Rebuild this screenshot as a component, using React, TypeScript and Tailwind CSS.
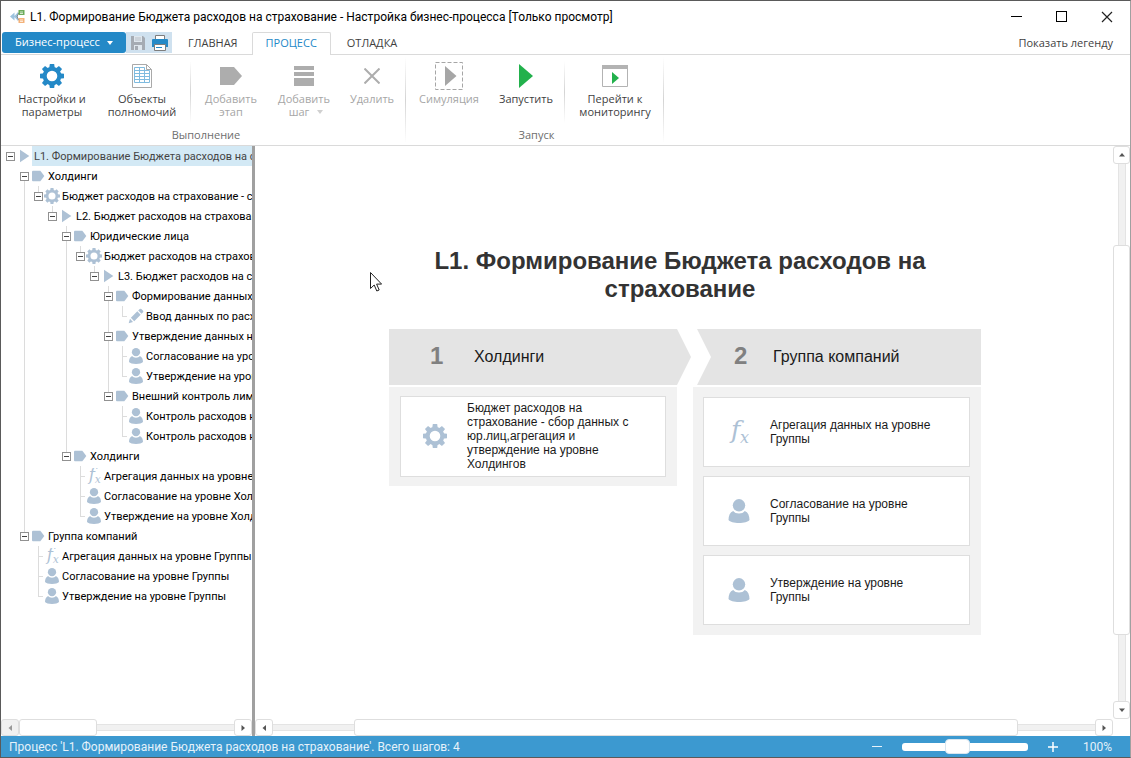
import type { ReactNode } from 'react';
import clsx from 'clsx';

type IconKind = 'play' | 'stage' | 'gear' | 'pencil' | 'user' | 'formula';

interface TreeRow {
  level: number;
  icon: IconKind;
  text: string;
}

interface StageData {
  title: string;
  steps: { icon: IconKind; text: string }[];
}

const treeRows: TreeRow[] = [
  { level: 0, icon: 'play', text: 'L1. Формирование Бюджета расходов на страхование' },
  { level: 1, icon: 'stage', text: 'Холдинги' },
  { level: 2, icon: 'gear', text: 'Бюджет расходов на страхование - сбор данных' },
  { level: 3, icon: 'play', text: 'L2. Бюджет расходов на страхование' },
  { level: 4, icon: 'stage', text: 'Юридические лица' },
  { level: 5, icon: 'gear', text: 'Бюджет расходов на страхование' },
  { level: 6, icon: 'play', text: 'L3. Бюджет расходов на страхование' },
  { level: 7, icon: 'stage', text: 'Формирование данных' },
  { level: 8, icon: 'pencil', text: 'Ввод данных по расходам' },
  { level: 7, icon: 'stage', text: 'Утверждение данных на уровне' },
  { level: 8, icon: 'user', text: 'Согласование на уровне' },
  { level: 8, icon: 'user', text: 'Утверждение на уровне' },
  { level: 7, icon: 'stage', text: 'Внешний контроль лимитов' },
  { level: 8, icon: 'user', text: 'Контроль расходов на страхование' },
  { level: 8, icon: 'user', text: 'Контроль расходов на страхование' },
  { level: 4, icon: 'stage', text: 'Холдинги' },
  { level: 5, icon: 'formula', text: 'Агрегация данных на уровне Холдингов' },
  { level: 5, icon: 'user', text: 'Согласование на уровне Холдингов' },
  { level: 5, icon: 'user', text: 'Утверждение на уровне Холдингов' },
  { level: 1, icon: 'stage', text: 'Группа компаний' },
  { level: 2, icon: 'formula', text: 'Агрегация данных на уровне Группы' },
  { level: 2, icon: 'user', text: 'Согласование на уровне Группы' },
  { level: 2, icon: 'user', text: 'Утверждение на уровне Группы' },
];

const stages: StageData[] = [
  {
    title: 'Холдинги',
    steps: [
      {
        icon: 'gear',
        text: 'Бюджет расходов на страхование - сбор данных с юр.лиц,агрегация и утверждение на уровне Холдингов',
      },
    ],
  },
  {
    title: 'Группа компаний',
    steps: [
      { icon: 'formula', text: 'Агрегация данных на уровне Группы' },
      { icon: 'user', text: 'Согласование на уровне Группы' },
      { icon: 'user', text: 'Утверждение на уровне Группы' },
    ],
  },
];

const teeth = [0, 45, 90, 135, 180, 225, 270, 315];

function Gear({ className }: { className?: string }) {
  return (
    <svg viewBox="0 0 24 24" className={className} aria-hidden="true">
      <circle cx="12" cy="12" r="7.3" fill="none" stroke="currentColor" strokeWidth="4" />
      {teeth.map((angle) => (
        <path key={angle} d="M9.2 4.5 9.800 0h4.400l.6 4.500z" fill="currentColor" transform={`rotate(${angle} 12 12)`} />
      ))}
    </svg>
  );
}

function NodeIcon({ kind, className }: { kind: IconKind; className?: string }) {
  if (kind === 'gear') return <Gear className={className} />;

  return (
    <svg viewBox="0 0 24 24" className={className} fill="currentColor" aria-hidden="true">
      {kind === 'play' && <path d="M6 2.500 20 12 6 21.500z" />}
      {kind === 'stage' && <path d="M3 5.500Q3 4 4.500 4H15.500l6 8-6 8H4.500Q3 20 3 18.500z" />}
      {kind === 'pencil' && (
        <path d="M1 23l2-7 4.500 5zM4.300 14.700 14 5l5 5-9.700 9.700zM15.300 3.800l2.300-2.300q1.200-1 2.400 0l2.600 2.600q1 1.200 0 2.400l-2.300 2.300z" />
      )}
      {kind === 'user' && (
        <>
          <circle cx="12" cy="6.300" r="6.200" />
          <path d="M1.500 21c0-4.500 1.500-7.700 4.700-9 1.300 1.700 3.200 2.500 5.800 2.500s4.500-.8 5.800-2.500c3.200 1.300 4.700 4.500 4.700 9-1.500 2-5.500 3-10.500 3S3 23 1.500 21z" />
        </>
      )}
      {kind === 'formula' && (
        <>
          <text x="4" y="18" fontSize="25" fontFamily="DejaVu Serif, serif" fontStyle="italic">
            f
          </text>
          <text x="13" y="23" fontSize="16" fontFamily="DejaVu Serif, serif" fontStyle="italic">
            x
          </text>
        </>
      )}
    </svg>
  );
}

/** Есть ли ниже строки index ещё один узел этого уровня у того же родителя */
const continues = (index: number, level: number) => {
  for (let i = index + 1; i < treeRows.length; i++) {
    if (treeRows[i].level < level) return false;
    if (treeRows[i].level === level) return true;
  }
  return false;
};

function TreeItem({ row, index }: { row: TreeRow; index: number }) {
  const expandable = treeRows[index + 1]?.level > row.level;
  const hasNext = continues(index, row.level);

  return (
    <li className="flex h-5 pl-[2px]">
      {Array.from({ length: row.level }, (_, level) => (
        <span key={level} className="flex w-[14px] shrink-0 pl-[7px]">
          {level > 0 && continues(index, level) && <span className="w-px bg-[#dcdcdc]" />}
        </span>
      ))}
      {expandable ? (
        <span className="flex w-[14px] shrink-0 flex-col pl-[3px]">
          <span className={clsx('ml-1 h-[6px] w-px', index > 1 && 'bg-[#dcdcdc]')} />
          <button
            aria-label="Свернуть"
            className="flex h-[9px] w-[9px] items-center justify-center border border-[#919191] bg-white"
          >
            <span className="h-px w-[5px] bg-[#444]" />
          </button>
          <span className={clsx('ml-1 w-px grow', hasNext && 'bg-[#dcdcdc]')} />
        </span>
      ) : (
        <span className="flex w-[14px] shrink-0 flex-col pl-[7px]">
          <span className="h-[11px] w-[5px] border-b border-l border-[#dcdcdc]" />
          <span className={clsx('w-px grow', hasNext && 'bg-[#dcdcdc]')} />
        </span>
      )}
      <span className="-ml-px flex w-4 shrink-0 items-center text-[#adc1d5]">
        <NodeIcon kind={row.icon} className="size-4 shrink-0" />
      </span>
      <span
        className={clsx(
          'grow pl-[2px] leading-[22px] whitespace-nowrap',
          index === 0 ? 'bg-[#d3e9f5] text-[#444]' : 'text-black'
        )}
      >
        {row.text}
      </span>
    </li>
  );
}

function RibbonButton({
  icon,
  label,
  className,
  disabled,
}: {
  icon: ReactNode;
  label: ReactNode;
  className: string;
  disabled?: boolean;
}) {
  return (
    <button
      disabled={disabled}
      className={clsx(
        'flex flex-col items-center text-center leading-[13px]',
        disabled ? 'text-[#a6a6a6]' : 'text-[#3f3f3f]',
        className
      )}
    >
      <span className="mb-px flex h-[30px] items-center justify-center">{icon}</span>
      {label}
    </button>
  );
}

function Separator({ className }: { className?: string }) {
  return <span className={clsx('w-px shrink-0 bg-linear-to-b from-white via-[#d4d4d4] to-white', className)} />;
}

const arrows = {
  left: 'M6 1v6L2.500 4z',
  right: 'M2.500 1v6L6 4z',
  up: 'M1 5.500h6L4 2z',
  down: 'M1 2.500h6L4 6z',
};

function ScrollArrow({ dir, label, disabled }: { dir: keyof typeof arrows; label: string; disabled?: boolean }) {
  return (
    <button
      aria-label={label}
      disabled={disabled}
      className={clsx(
        'flex shrink-0 items-center justify-center rounded-[3px] border border-[#dedede]',
        dir === 'left' || dir === 'right' ? 'h-[17px] w-[18px]' : 'h-[18px] w-[17px]',
        disabled ? 'bg-[#f1f1f1] text-[#999]' : 'bg-white text-[#555]'
      )}
    >
      <svg viewBox="0 0 8 8" className="size-2" fill="currentColor" aria-hidden="true">
        <path d={arrows[dir]} />
      </svg>
    </button>
  );
}

function Stage({ stage, index }: { stage: StageData; index: number }) {
  const first = index === 0;

  return (
    <section className="w-[288px]">
      <header
        className={clsx(
          'flex h-14 items-center bg-[#e4e4e4]',
          first
            ? '-mr-[14px] gap-[30px] pl-[41px] [clip-path:polygon(0_0,288px_0,100%_50%,288px_100%,0_100%)]'
            : 'ml-1 gap-[25px] pl-[37px] [clip-path:polygon(0_0,100%_0,100%_100%,0_100%,14px_50%)]'
        )}
      >
        <span className="w-[14px] pb-[2px] text-2xl font-bold text-[#808080]">{index + 1}</span>
        <h2 className="text-base text-[#1a1a1a]">{stage.title}</h2>
      </header>
      <ul
        className={clsx(
          'mt-[2px] flex flex-col gap-[9px] bg-[#f2f2f2]',
          first ? 'px-[11px] py-[9px]' : 'py-[10px] pr-[11px] pl-[10px]'
        )}
      >
        {stage.steps.map((step) => (
          <li key={step.text} className="flex min-h-[70px] items-center border border-[#dedede] bg-white pt-1 pr-6 pb-[5px]">
            <span className={clsx('flex w-[66px] shrink-0 justify-center text-[#adc1d5]', first ? 'pl-px' : 'pl-1')}>
              <NodeIcon kind={step.icon} className="size-6" />
            </span>
            <p className="text-xs leading-[14px] text-[#1a1a1a]">{step.text}</p>
          </li>
        ))}
      </ul>
    </section>
  );
}

function TitleBar() {
  return (
    <div className="flex h-[31px] items-center pl-[9px] text-xs text-black">
      <svg viewBox="0 0 16 16" className="mr-1 size-4" aria-hidden="true">
        <path d="M0 7.500 4.500 3.500v8zM4 7.500 8 3v9z" fill="#9cc3de" />
        <path d="M7 7.500 9 3.500M7 7.500l2 4" stroke="#8a8a8a" fill="none" />
        <rect x="8.500" y="1" width="6" height="5" fill="#6bab5b" />
        <path d="M10 3h3M10 4.500h3" stroke="#fff" strokeWidth=".7" />
        <rect x="8.500" y="9" width="6" height="5" fill="#f3b27a" />
        <path d="M10 11h3M10 12.500h3" stroke="#fff" strokeWidth=".7" />
      </svg>
      <h1 className="grow font-['Roboto','Noto_Sans',sans-serif] whitespace-nowrap">
        L1. Формирование Бюджета расходов на страхование - Настройка бизнес-процесса [Только просмотр]
      </h1>
      <div className="flex">
        <button aria-label="Свернуть окно" className="flex h-[30px] w-[45px] items-center justify-center">
          <span className="h-px w-[11px] bg-black" />
        </button>
        <button aria-label="Развернуть окно" className="flex h-[30px] w-[45px] items-center justify-center">
          <span className="size-[11px] border border-black" />
        </button>
        <button aria-label="Закрыть окно" className="flex h-[30px] w-[46px] items-center justify-center">
          <svg viewBox="0 0 12 12" className="size-3" stroke="#222" strokeWidth="1.200" aria-hidden="true">
            <path d="M1 1l10 10M11 1 1 11" />
          </svg>
        </button>
      </div>
    </div>
  );
}

function Tabs() {
  return (
    <nav className="flex h-[23px] items-stretch border-b border-[#dadada] pl-px text-[11px] text-[#3f3f3f]">
      <button className="mb-px flex w-[124px] items-center justify-center gap-[7px] rounded-[3px] bg-[#2489c7] text-white">
        Бизнес-процесс
        <svg viewBox="0 0 6 4" className="h-1 w-[6px]" fill="currentColor" aria-hidden="true">
          <path d="M0 0h6L3 4z" />
        </svg>
      </button>
      <div className="mb-px flex w-[46px] items-center gap-[6px] bg-[#cfe1ef] pl-[4px]">
        <button aria-label="Сохранить" disabled>
          <svg viewBox="0 0 16 16" className="size-4" aria-hidden="true">
            <path d="M1 1h12l2 2v12H1z" fill="#a5abb3" />
            <path d="M4 1h8v6H4zM4 10h8v5H4z" fill="#dfe7ee" />
            <path d="M5 3h6M5 5h6" stroke="#b8bec5" />
            <path d="M5 11h3v4H5z" fill="#a5abb3" />
          </svg>
        </button>
        <button aria-label="Печать">
          <svg viewBox="0 0 16 16" className="size-4" aria-hidden="true">
            <path d="M3.500.5h9V5h-9z" fill="#fff" stroke="#7d7d7d" />
            <path d="M0 5q0-1 1-1h14q1 0 1 1v7H0z" fill="#2489c7" />
            <path d="M2.500 9.500h11v6h-11z" fill="#fff" stroke="#7d7d7d" />
            <path d="M4 12.500h6" stroke="#2489c7" />
          </svg>
        </button>
      </div>
      <button className="pr-[14px] pl-4">ГЛАВНАЯ</button>
      <button className="-mb-px rounded-t-[2px] border border-b-0 border-[#dadada] bg-white px-[13px] pb-px text-[#2489c7]">
        ПРОЦЕСС
      </button>
      <button className="px-4">ОТЛАДКА</button>
      <button className="ml-auto pr-[17px]">Показать легенду</button>
    </nav>
  );
}

function Ribbon() {
  return (
    <div className="flex h-[91px] border-b border-[#dadada] text-[11px]">
      <div className="flex w-[404px] flex-col pt-[6px] pl-[6px]">
        <div className="flex h-[62px] items-stretch">
          <RibbonButton
            className="w-[90px]"
            icon={<Gear className="size-6 text-[#2489c7]" />}
            label={<>Настройки и<br />параметры</>}
          />
          <RibbonButton
            className="w-[90px]"
            icon={
              <svg viewBox="0 0 20 24" className="h-6 w-5" fill="none" aria-hidden="true">
                <path d="M.5.5h14l5 5v18H.5z" stroke="#a9a9a9" />
                <path d="M14.500.5v5h5" stroke="#a9a9a9" />
                <path d="M2.500 3.500h10M2.500 6.500h15M2.500 9.500h15M2.500 12.500h15M2.500 15.500h15M2.500 18.500h15M2.500 3.500v15M7.500 3.500v15M12.500 3.500v15M17.500 6.500v12" stroke="#7fbbdf" />
              </svg>
            }
            label={<>Объекты<br />полномочий</>}
          />
          <Separator className="mx-[3px]" />
          <RibbonButton
            disabled
            className="w-[74px]"
            icon={
              <svg viewBox="0 0 22 20" className="h-5 w-[22px]" fill="#adadad" aria-hidden="true">
                <path d="M0 1h14l8 9-8 9H0z" />
              </svg>
            }
            label={<>Добавить<br />этап</>}
          />
          <RibbonButton
            disabled
            className="w-[72px]"
            icon={
              <svg viewBox="0 0 20 20" className="size-5" fill="#adadad" aria-hidden="true">
                <path d="M0 0h20v4H0zM0 6h20v4H0zM0 12h20v8H0z" />
              </svg>
            }
            label={
              <>
                Добавить
                <span className="flex items-center gap-2 pl-1">
                  шаг
                  <svg viewBox="0 0 6 4" className="h-1 w-[6px]" fill="#d0d0d0" aria-hidden="true">
                    <path d="M0 0h6L3 4z" />
                  </svg>
                </span>
              </>
            }
          />
          <RibbonButton
            disabled
            className="w-[64px]"
            icon={
              <svg viewBox="0 0 16 16" className="size-4" stroke="#adadad" strokeWidth="2" aria-hidden="true">
                <path d="M.5.5l15 15M15.500.5l-15 15" />
              </svg>
            }
            label="Удалить"
          />
        </div>
        <span className="pt-1 text-center text-[#6e6e6e]">Выполнение</span>
      </div>
      <Separator className="my-[2px]" />
      <div className="flex w-[257px] flex-col pt-[6px] pl-1">
        <div className="flex h-[62px] items-stretch">
          <RibbonButton
            disabled
            className="w-[78px]"
            icon={
              <svg viewBox="0 0 28 28" className="size-7" aria-hidden="true">
                <path d="M.5.5h27v27H.5z" fill="none" stroke="#a6a6a6" strokeDasharray="4 2" />
                <path d="M10 4l11.500 10L10 24z" fill="#a6a6a6" />
              </svg>
            }
            label="Симуляция"
          />
          <RibbonButton
            className="w-[76px]"
            icon={
              <svg viewBox="0 0 14 24" className="h-6 w-[14px]" fill="#22b14c" aria-hidden="true">
                <path d="M0 0l14 12L0 24z" />
              </svg>
            }
            label="Запустить"
          />
          <Separator />
          <RibbonButton
            className="grow pl-[2px]"
            icon={
              <svg viewBox="0 0 26 22" className="h-[22px] w-[26px]" aria-hidden="true">
                <path d="M.5.5h25v21H.5z" fill="#fff" stroke="#b3b3b3" />
                <path d="M0 0h26v4H0z" fill="#b3b3b3" />
                <path d="M10 7l7 6-7 6z" fill="#22b14c" />
              </svg>
            }
            label={<>Перейти к<br />мониторингу</>}
          />
        </div>
        <span className="pt-1 text-center text-[#6e6e6e]">Запуск</span>
      </div>
      <Separator className="my-[2px]" />
    </div>
  );
}

function StatusBar() {
  return (
    <footer className="flex h-[21px] items-center bg-[#3c99d0] pr-[18px] pl-2 font-['Roboto','Noto_Sans',sans-serif] text-xs text-[#e6f2fa]">
      <span className="grow">Процесс 'L1. Формирование Бюджета расходов на страхование'. Всего шагов: 4</span>
      <button aria-label="Уменьшить" className="flex w-[10px] justify-center">
        <span className="h-px w-[10px] bg-[#e6f2fa]" />
      </button>
      <input
        type="range"
        aria-label="Масштаб"
        min={0}
        max={100}
        defaultValue={43}
        className="mx-5 h-2 w-[126px] appearance-none rounded-[3px] bg-white [&::-webkit-slider-thumb]:h-[15px] [&::-webkit-slider-thumb]:w-[25px] [&::-webkit-slider-thumb]:appearance-none [&::-webkit-slider-thumb]:rounded-[4px] [&::-webkit-slider-thumb]:border [&::-webkit-slider-thumb]:border-[#d9e6ef] [&::-webkit-slider-thumb]:bg-white"
      />
      <button aria-label="Увеличить" className="flex w-[10px] justify-center">
        <svg viewBox="0 0 10 10" className="size-[10px]" stroke="#fff" strokeWidth="1.500" aria-hidden="true">
          <path d="M5 0v10M0 5h10" />
        </svg>
      </button>
      <span className="ml-[25px]">100%</span>
    </footer>
  );
}

export default function App() {
  return (
    <div className="flex h-screen flex-col overflow-hidden border border-[#5a5a5a] border-r-[#a0a0a0] bg-white font-['Open_Sans','Noto_Sans',sans-serif]">
      <TitleBar />
      <Tabs />
      <Ribbon />

      <main className="flex min-h-0 grow">
        <aside className="flex w-[251px] shrink-0 flex-col overflow-hidden">
          <ul className="min-h-0 grow overflow-hidden font-['Roboto','Noto_Sans',sans-serif] text-[11px]">
            {treeRows.map((row, index) => (
              <TreeItem key={index} row={row} index={index} />
            ))}
          </ul>
          <div className="flex h-[17px] items-center">
            <ScrollArrow dir="left" label="Прокрутить дерево влево" disabled />
            <span className="h-[17px] w-[78px] rounded-[3px] border border-[#dedede] bg-white" />
            <span className="h-[7px] grow border-y border-[#e4e4e4] bg-[#f1f1f1]" />
            <ScrollArrow dir="right" label="Прокрутить дерево вправо" />
          </div>
        </aside>
        <div className="w-[3px] shrink-0 bg-[#a0a0a0]" />

        <div className="flex min-w-0 grow flex-col">
          <div className="flex min-h-0 grow">
            <div className="relative flex min-w-0 grow justify-center overflow-hidden pt-[101px] pl-[2px] font-['Liberation_Sans',Arial,sans-serif]">
              <div className="w-[592px]">
                <h2 className="mb-[26px] pr-[10px] text-center text-2xl leading-7 font-bold text-[#333]">
                  L1. Формирование Бюджета расходов на страхование
                </h2>
                <div className="flex items-start gap-4">
                  {stages.map((stage, index) => (
                    <Stage key={stage.title} stage={stage} index={index} />
                  ))}
                </div>
              </div>
              <svg viewBox="0 0 12 20" className="absolute top-[126px] left-[115px] h-5 w-3" aria-hidden="true">
                <path d="M.5.5v16l3.700-3.500 2.600 6 2.400-1-2.600-5.900h5z" fill="#fff" stroke="#222" />
              </svg>
            </div>
            <div className="flex w-[17px] shrink-0 flex-col items-center">
              <ScrollArrow dir="up" label="Прокрутить вверх" />
              <span className="w-2 flex-[81] border-x border-[#e4e4e4] bg-[#f1f1f1]" />
              <span className="w-[17px] flex-[390] rounded-[3px] border border-[#dedede] bg-white" />
              <span className="w-2 flex-[66] border-x border-[#e4e4e4] bg-[#f1f1f1]" />
              <ScrollArrow dir="down" label="Прокрутить вниз" />
            </div>
          </div>
          <div className="flex h-[17px] items-center pr-[17px]">
            <ScrollArrow dir="left" label="Прокрутить влево" />
            <span className="h-[7px] flex-[81] border-y border-[#e4e4e4] bg-[#f1f1f1]" />
            <span className="h-[17px] flex-[665] rounded-[3px] border border-[#dedede] bg-white" />
            <span className="h-[7px] flex-[77] border-y border-[#e4e4e4] bg-[#f1f1f1]" />
            <ScrollArrow dir="right" label="Прокрутить вправо" />
          </div>
        </div>
      </main>

      <StatusBar />
    </div>
  );
}
